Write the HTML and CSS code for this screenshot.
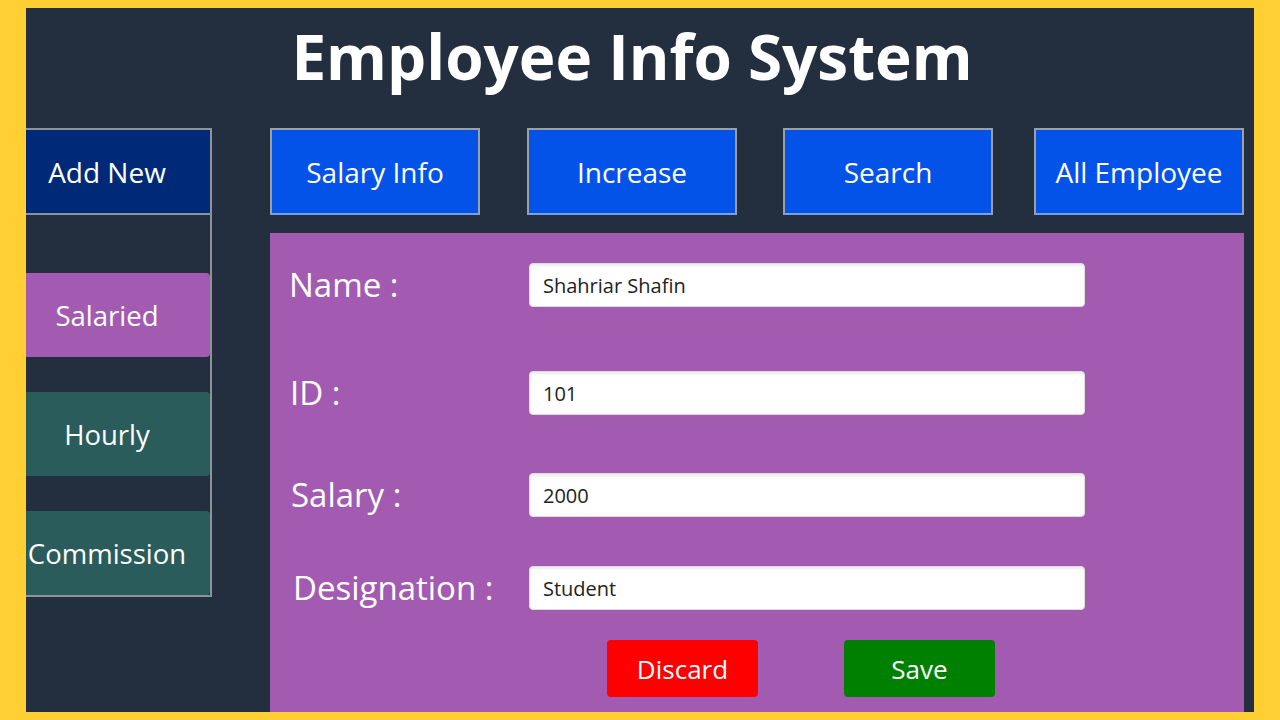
FILE: index.html
```html
<!DOCTYPE html>
<html>
<head>
<meta charset="utf-8">
<title>Employee Info System</title>
<link rel="stylesheet" href="styles.css">
</head>
<body>
<div class="frame">
  <header class="header">
    <h1 class="title">Employee Info System</h1>
  </header>
  <div class="main">
    <aside class="sidebar">
      <div class="side-add">Add New</div>
      <div class="side-list">
        <div class="side-btn salaried">Salaried</div>
        <div class="side-btn hourly">Hourly</div>
        <div class="side-btn commission">Commission</div>
      </div>
    </aside>
    <section class="content">
      <nav class="tabs">
        <div class="tab">Salary Info</div>
        <div class="tab">Increase</div>
        <div class="tab">Search</div>
        <div class="tab tab-last">All Employee</div>
      </nav>
      <div class="panel">
        <div class="row row-name">
          <label class="label">Name :</label>
          <div class="input">Shahriar Shafin</div>
        </div>
        <div class="row row-id">
          <label class="label">ID :</label>
          <div class="input">101</div>
        </div>
        <div class="row row-salary">
          <label class="label">Salary :</label>
          <div class="input">2000</div>
        </div>
        <div class="row row-desig">
          <label class="label">Designation :</label>
          <div class="input">Student</div>
        </div>
        <div class="actions">
          <div class="btn discard">Discard</div>
          <div class="btn save">Save</div>
        </div>
      </div>
    </section>
  </div>
</div>
</body>
</html>
```
FILE: styles.css
```css
* { box-sizing: border-box; }
html, body { margin: 0; padding: 0; }
body {
  background: #ffcf33;
  width: 1280px;
  height: 720px;
  overflow: hidden;
  font-family: "Open Sans", "Noto Sans", sans-serif;
  color: #fff;
}
.frame {
  margin: 8px 26px 8px 26px;
  height: 704px;
  background: #232f3e;
  overflow: hidden;
  display: flex;
  flex-direction: column;
}
.header {
  height: 120px;
  display: flex;
  justify-content: center;
  padding-right: 16px;
}
.title {
  margin: 11px 0 0 0;
  font-size: 62px;
  font-weight: 700;
  line-height: 74px;
  letter-spacing: 0;
}
.main {
  display: flex;
  flex: 1;
  min-height: 0;
}
.sidebar {
  margin-left: -22px;
  width: 208px;
  height: 469px;
  border-top: 2px solid #8d939a;
  border-right: 2px solid #8d939a;
  border-bottom: 2px solid #8d939a;
  display: flex;
  flex-direction: column;
  flex-shrink: 0;
}
.side-add {
  height: 85px;
  background: #002a78;
  border-bottom: 2px solid #8d939a;
  display: flex;
  align-items: center;
  justify-content: center;
  font-size: 28px;
}
.side-list {
  display: flex;
  flex-direction: column;
  gap: 35px;
  padding-top: 58px;
}
.side-btn {
  height: 84px;
  display: flex;
  align-items: center;
  justify-content: center;
  font-size: 27.5px;
  border-radius: 0 4px 4px 0;
}
.salaried { background: #a35bb1; }
.hourly { background: #2a5c5b; }
.commission { background: #2a5c5b; }
.content {
  margin-left: 58px;
  width: 974px;
  display: flex;
  flex-direction: column;
}
.tabs {
  display: flex;
  gap: 46px;
}
.tab {
  width: 210px;
  height: 87px;
  background: #0453e8;
  border: 2px solid #9aa0a6;
  border-bottom-color: #7a9ee6;
  display: flex;
  align-items: center;
  justify-content: center;
  font-size: 28px;
}
.tab:first-child { margin-right: 1px; }
.tab-last { margin-left: -5px; }
.panel {
  margin-top: 18px;
  flex: 1;
  background: #a35bb1;
  display: flex;
  flex-direction: column;
  padding: 30px 0 0 19px;
}
.row {
  display: flex;
  align-items: center;
  height: 44px;
}
.row-id { margin-top: 64px; }
.row-salary { margin-top: 58px; }
.row-desig { margin-top: 49px; }
.label {
  width: 240px;
  font-size: 33px;
  line-height: 44px;
}
.row-id .label { padding-left: 1px; }
.row-salary .label { padding-left: 2px; }
.row-desig .label { padding-left: 4px; }
.input {
  width: 556px;
  height: 44px;
  background: #fff;
  border-radius: 4px;
  border: 1px solid #ddd;
  box-shadow: inset 0 2px 2px rgba(0,0,0,0.08);
  color: #222;
  font-size: 20px;
  display: flex;
  align-items: center;
  padding-left: 13px;
}
.actions {
  display: flex;
  gap: 86px;
  margin-top: 30px;
  padding-left: 318px;
}
.btn {
  width: 151px;
  height: 57px;
  border-radius: 4px;
  display: flex;
  align-items: center;
  justify-content: center;
  font-size: 26px;
  color: #fff;
}
.discard { background: #ff0000; }
.save { background: #008000; }
```
